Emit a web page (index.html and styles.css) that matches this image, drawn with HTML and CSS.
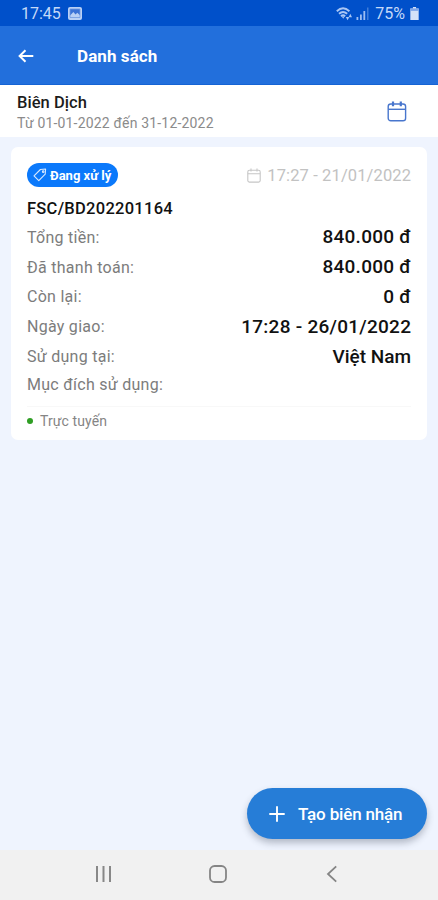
FILE: index.html
```html
<!DOCTYPE html>
<html lang="vi">
<head>
<meta charset="utf-8">
<title>Danh sách</title>
<link rel="stylesheet" href="styles.css">
</head>
<body>
<div class="screen">
  <div class="status">
    <span class="clock">17:45</span>
    <svg class="photo" width="14" height="13" viewBox="0 0 14 13"><rect width="14" height="13" rx="2" fill="#b9d0f5"/><path d="M2 2h10v6.2L9.3 5.7 7.5 7.4 5.4 5 2 8.6z" fill="#3a72d6"/><path d="M2 2h10v8.5H2z" fill="none" stroke="#6f99e2" stroke-width=".8"/></svg>
    <svg class="wifi" width="17" height="14" viewBox="0 0 17 14" fill="none" stroke="#a9c6f4" stroke-width="1.9"><path d="M.8 4.2Q7 -1.6 13.4 4.2M3 6.8Q7 3.2 11.2 6.8M5 9.2Q7 7.4 9.2 9.2"/><path d="M5.8 9.6h2.8L7.2 11.8zM9.8 10l1.8 3.2 1.7-3.2zM12.6 10.2l1.7-3.4 1.7 3.4z" fill="#a9c6f4" stroke="none"/></svg>
    <svg class="signal" width="13" height="13" viewBox="0 0 13 13" fill="#9dbdf2"><path d="M.5 10h1.8v3H.5zM4 7.5h1.8V13H4zM7.4 4h1.8v9H7.4z"/><path d="M11 .5h1.5V13H11z" opacity=".4"/></svg>
    <span class="percent">75%</span>
    <svg class="battery" width="9" height="13" viewBox="0 0 9 14"><path d="M2.8 0h3.4v1.5H9V14H0V1.5h2.8z" fill="#d3e1f8"/><path d="M0 1.5h9v2.7H0z" fill="#7ea6e9"/></svg>
  </div>
  <header class="appbar">
    <svg class="back" width="16" height="14" viewBox="0 0 16 14" fill="none" stroke="#fff" stroke-width="2"><path d="M15.3 7H2M7.5 1.2 1.6 7l5.9 5.8"/></svg>
    <h1 class="title">Danh sách</h1>
  </header>
  <section class="filter">
    <div>
      <div class="service">Biên Dịch</div>
      <div class="range">Từ 01-01-2022 đến 31-12-2022</div>
    </div>
    <svg class="calendar" width="20" height="21" viewBox="0 0 20 21" fill="none" stroke="#4876cd" stroke-width="1.4"><rect x="1.2" y="3" width="17.4" height="16.8" rx="2.6"/><path d="M1.2 8.3h17.4"/><path d="M6 .6v4.6M13.8 .6v4.6" stroke-width="2.2"/></svg>
  </section>
  <main class="content">
    <article class="card">
      <div class="top">
        <span class="badge">
          <svg width="14" height="14" viewBox="0 0 14 14" fill="none" stroke="#d9e9ff" stroke-width="1.1" stroke-linejoin="round"><path d="M1 7.8 7.4 1.5 12.6 1 12.2 6.2 5.8 12.6z"/><circle cx="10.2" cy="3.7" r=".8"/></svg>
          <span class="badge-text">Đang xử lý</span>
        </span>
        <span class="created">
          <svg width="14" height="15" viewBox="0 0 14 15" fill="none" stroke="#c6c6c6" stroke-width="1.1"><rect x=".8" y="2.3" width="12.4" height="11.8" rx="1.6"/><path d="M.8 5.7h12.4M4 .4v3.2M10 .4v3.2"/></svg>
          <span class="created-text">17:27 - 21/01/2022</span>
        </span>
      </div>
      <div class="code"><span class="code-text">FSC/BD202201164</span></div>
      <div class="row"><span class="label">Tổng tiền:</span><span class="value">840.000 đ</span></div>
      <div class="row"><span class="label">Đã thanh toán:</span><span class="value">840.000 đ</span></div>
      <div class="row"><span class="label">Còn lại:</span><span class="value">0 đ</span></div>
      <div class="row"><span class="label">Ngày giao:</span><span class="value">17:28 - 26/01/2022</span></div>
      <div class="row"><span class="label">Sử dụng tại:</span><span class="value place">Việt Nam</span></div>
      <div class="row last"><span class="label">Mục đích sử dụng:</span></div>
      <div class="online"><i class="dot"></i><span class="online-text">Trực tuyến</span></div>
    </article>
    <button class="create">
      <svg width="16" height="16" viewBox="0 0 16 16" stroke="#fff" stroke-width="1.9"><path d="M8 .3v15.4M.3 8h15.4"/></svg>
      <span class="create-text">Tạo biên nhận</span>
    </button>
  </main>
  <nav class="nav">
    <svg width="18" height="18" viewBox="0 0 18 18" stroke="#888" stroke-width="2"><path d="M3 1v16M9.5 1v16M16 1v16"/></svg>
    <svg width="18" height="18" viewBox="0 0 18 18" fill="none" stroke="#858585" stroke-width="1.8"><rect x="1" y="1" width="16" height="16" rx="4.6"/></svg>
    <svg width="18" height="18" viewBox="0 0 18 18" fill="none" stroke="#858585" stroke-width="1.8"><path d="M12.2 1.3 4 9l8.2 7.7"/></svg>
  </nav>
</div>
</body>
</html>
```
FILE: styles.css
```css
* { box-sizing: border-box; }
body { margin: 0; font-family: Roboto, "Liberation Sans", sans-serif; }
svg { display: block; flex: none; }
.screen { width: 438px; height: 900px; display: flex; flex-direction: column; background: #eff4fe; overflow: hidden; white-space: nowrap; }
.status { height: 26px; flex: none; background: #0050ca; display: flex; align-items: center; padding: 1px 19px 0 21px; color: #c5d9f8; font-size: 16px; }
.photo { margin-left: 7px; }
.wifi { margin-left: auto; }
.signal { margin-left: 3px; }
.percent { margin-left: 6px; }
.battery { margin-left: 5px; }
.appbar { height: 59px; flex: none; background: #226fdc; border-bottom: 1px solid #1563d4; display: flex; align-items: center; padding: 1px 18px 0; }
.title { margin: 1px 0 0 43px; font-size: 17px; font-weight: 700; color: #fff; letter-spacing: .08px; }
.filter { height: 52px; flex: none; background: #fff; display: flex; align-items: center; justify-content: space-between; padding: 0 31px 0 17px; }
.service { font-size: 16.5px; font-weight: 500; line-height: 20px; margin-top: 4px; letter-spacing: .05px; color: #1c1c1c; }
.range { font-size: 14px; line-height: 21px; letter-spacing: .18px; color: #8b8b8b; }
.content { flex: 1; display: flex; flex-direction: column; padding: 10px 11px 11px; }
.card { background: #fff; border-radius: 7px; height: 293px; padding: 15px 16px 0; }
.top { height: 26px; display: flex; align-items: center; justify-content: space-between; }
.badge { height: 24px; width: 91px; border-radius: 12px; background: #0b79fb; color: #fff; display: flex; align-items: center; gap: 3px; padding-left: 6px; font-size: 13px; font-weight: 700; }
.created { display: flex; align-items: center; gap: 6px; font-size: 16.5px; color: #c2c2c2; }
.created-text { letter-spacing: .12px; margin-right: -.12px; }
.code { height: 34px; line-height: 41px; font-size: 16.5px; font-weight: 500; letter-spacing: .27px; color: #111; }
.row { height: 29.8px; display: flex; align-items: center; justify-content: space-between; }
.label { font-size: 16px; letter-spacing: .27px; padding-top: 1px; color: #7c7c7c; }
.value { font-size: 19px; font-weight: 500; letter-spacing: .26px; margin-right: -.26px; color: #111; }
.value.place { letter-spacing: 0; margin-right: 0; }
.row.last { height: 26px; padding-top: 1px; }
.online { margin-top: 9px; border-top: 1px solid #f8f8f8; height: 29px; display: flex; align-items: center; gap: 7px; font-size: 14px; letter-spacing: .1px; color: #858585; }
.dot { width: 6px; height: 6px; border-radius: 50%; background: #2f9e24; }
.create { margin: auto 0 0 auto; width: 180px; height: 51px; border: 0; border-radius: 26px; background: #267dd7; box-shadow: 0 4px 7px rgba(40, 50, 70, .3); color: #fff; font: 500 17px Roboto, sans-serif; letter-spacing: -.16px; display: flex; align-items: center; padding: 0 0 0 22px; gap: 13px; }
.nav { height: 50px; flex: none; background: #f1f1f1; display: flex; justify-content: space-between; align-items: center; padding: 0 96px 3px 94px; }
```
